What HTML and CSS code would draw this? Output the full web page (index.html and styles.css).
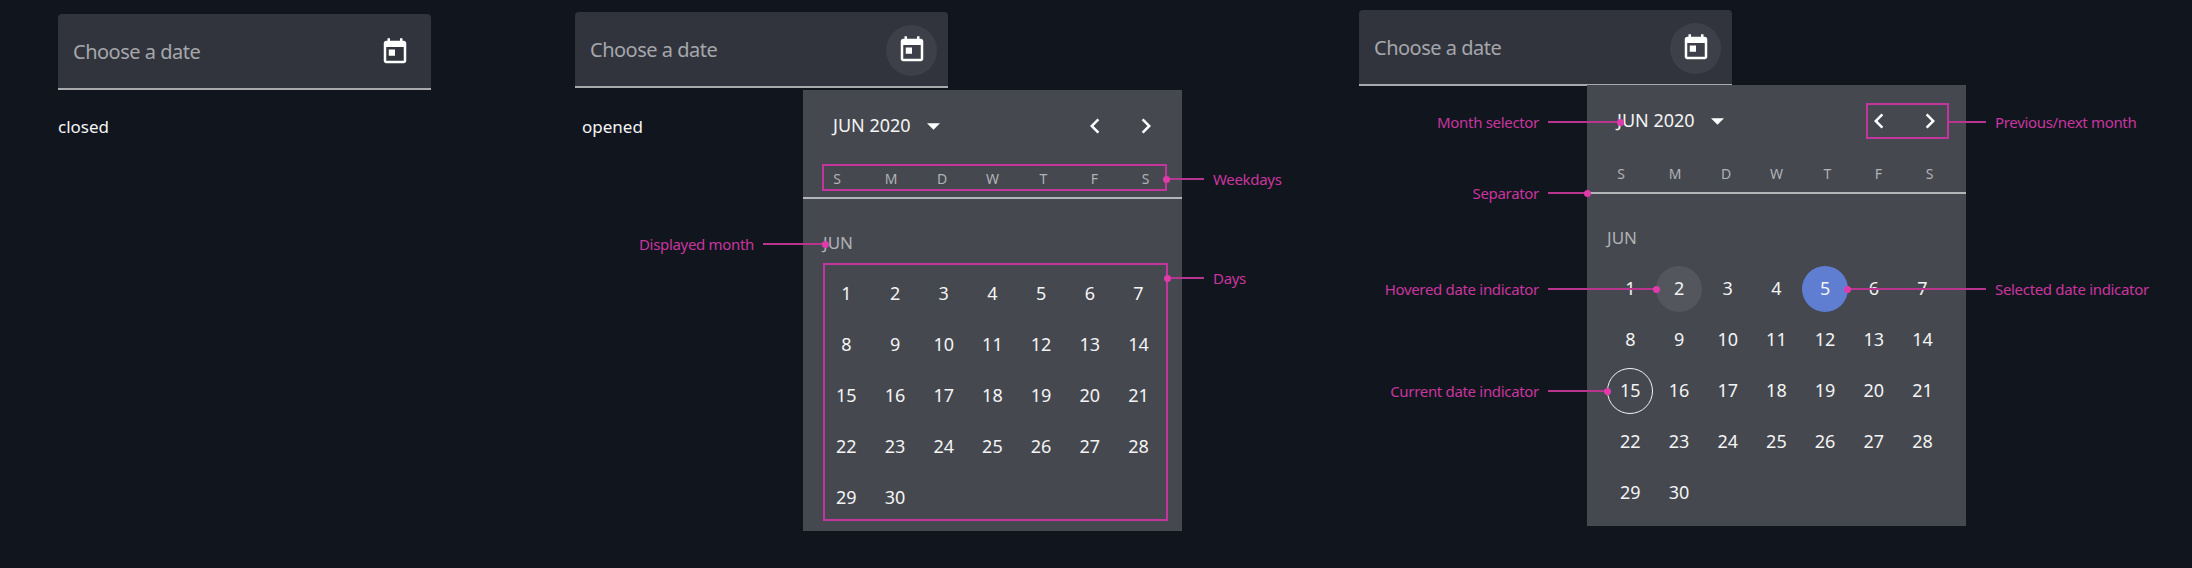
FILE: index.html
```html
<!DOCTYPE html>
<html lang="en">
<head>
    <meta charset="UTF-8">
    <meta name="viewport" content="width=device-width, initial-scale=1.0">
    <title>Date picker anatomy</title>
    <link rel="stylesheet" href="styles.css">
</head>
<body>
    <main class="examples">

        <section class="example example-closed">
            <div class="field">
                <span class="placeholder">Choose a date</span>
                <span class="icon-btn">
                    <svg class="icon-today" viewBox="0 0 24 24"><path d="M19 3h-1V1h-2v2H8V1H6v2H5c-1.11 0-1.99.9-1.99 2L3 19c0 1.1.89 2 2 2h14c1.1 0 2-.9 2-2V5c0-1.1-.9-2-2-2zm0 16H5V8h14v11zM7 10h5v5H7z"/></svg>
                </span>
            </div>
            <p class="caption">closed</p>
        </section>

        <section class="example example-opened">
            <div class="field">
                <span class="placeholder">Choose a date</span>
                <span class="icon-btn is-active">
                    <svg class="icon-today" viewBox="0 0 24 24"><path d="M19 3h-1V1h-2v2H8V1H6v2H5c-1.11 0-1.99.9-1.99 2L3 19c0 1.1.89 2 2 2h14c1.1 0 2-.9 2-2V5c0-1.1-.9-2-2-2zm0 16H5V8h14v11zM7 10h5v5H7z"/></svg>
                </span>
            </div>
            <p class="caption caption-opened">opened</p>
            <div class="popup">
                <div class="popup-head">
                    <span class="month-select">JUN 2020</span>
                    <svg class="icon-caret" viewBox="0 0 10 5"><path d="M0 0l5 5 5-5z"/></svg>
                    <svg class="icon-nav" viewBox="0 0 24 24"><path d="M15.41 7.41L14 6l-6 6 6 6 1.41-1.41L10.83 12z"/></svg>
                    <svg class="icon-nav" viewBox="0 0 24 24"><path d="M8.59 16.59L10 18l6-6-6-6-1.41 1.41L13.17 12z"/></svg>
                </div>
                <div class="weekdays">
                    <span>S</span><span>M</span><span>D</span><span>W</span><span>T</span><span>F</span><span>S</span>
                </div>
                <div class="month-label">JUN</div>
                <div class="days">
                    <span>1</span><span>2</span><span>3</span><span>4</span><span>5</span><span>6</span><span>7</span>
                    <span>8</span><span>9</span><span>10</span><span>11</span><span>12</span><span>13</span><span>14</span>
                    <span>15</span><span>16</span><span>17</span><span>18</span><span>19</span><span>20</span><span>21</span>
                    <span>22</span><span>23</span><span>24</span><span>25</span><span>26</span><span>27</span><span>28</span>
                    <span>29</span><span>30</span>
                </div>
            </div>
        </section>

        <section class="example example-states">
            <div class="field">
                <span class="placeholder">Choose a date</span>
                <span class="icon-btn is-active">
                    <svg class="icon-today" viewBox="0 0 24 24"><path d="M19 3h-1V1h-2v2H8V1H6v2H5c-1.11 0-1.99.9-1.99 2L3 19c0 1.1.89 2 2 2h14c1.1 0 2-.9 2-2V5c0-1.1-.9-2-2-2zm0 16H5V8h14v11zM7 10h5v5H7z"/></svg>
                </span>
            </div>
            <div class="popup">
                <div class="popup-head">
                    <span class="month-select">JUN 2020</span>
                    <svg class="icon-caret" viewBox="0 0 10 5"><path d="M0 0l5 5 5-5z"/></svg>
                    <svg class="icon-nav" viewBox="0 0 24 24"><path d="M15.41 7.41L14 6l-6 6 6 6 1.41-1.41L10.83 12z"/></svg>
                    <svg class="icon-nav" viewBox="0 0 24 24"><path d="M8.59 16.59L10 18l6-6-6-6-1.41 1.41L13.17 12z"/></svg>
                </div>
                <div class="weekdays">
                    <span>S</span><span>M</span><span>D</span><span>W</span><span>T</span><span>F</span><span>S</span>
                </div>
                <div class="month-label">JUN</div>
                <div class="days">
                    <span>1</span><span class="is-hovered">2</span><span>3</span><span>4</span><span class="is-selected">5</span><span>6</span><span>7</span>
                    <span>8</span><span>9</span><span>10</span><span>11</span><span>12</span><span>13</span><span>14</span>
                    <span class="is-today">15</span><span>16</span><span>17</span><span>18</span><span>19</span><span>20</span><span>21</span>
                    <span>22</span><span>23</span><span>24</span><span>25</span><span>26</span><span>27</span><span>28</span>
                    <span>29</span><span>30</span>
                </div>
            </div>
        </section>
    </main>

    <!-- annotations sit on top of the pickers -->
    <div class="frame frame-weekdays"></div>
    <div class="frame frame-days"></div>
    <div class="frame frame-nav"></div>

    <div class="note note-l note-displayed"><span class="note-text">Displayed month</span><i class="leader"></i></div>
    <div class="note note-l note-selector"><span class="note-text">Month selector</span><i class="leader"></i></div>
    <div class="note note-l note-separator"><span class="note-text">Separator</span><i class="leader"></i></div>
    <div class="note note-l note-hovered"><span class="note-text">Hovered date indicator</span><i class="leader"></i></div>
    <div class="note note-l note-current"><span class="note-text">Current date indicator</span><i class="leader"></i></div>

    <div class="note note-r note-weekdays"><i class="leader"></i><span class="note-text">Weekdays</span></div>
    <div class="note note-r note-days"><i class="leader"></i><span class="note-text">Days</span></div>
    <div class="note note-r note-nav"><i class="leader no-dot"></i><span class="note-text">Previous/next month</span></div>
    <div class="note note-r note-selected"><i class="leader"></i><span class="note-text">Selected date indicator</span></div>
</body>
</html>
```

FILE: styles.css
```css
html, body { height: 100%; }
body { margin: 0; background-color: #11161e; color: #f4f4f5; font-family: "Noto Sans", sans-serif; }

.examples { display: flex; align-items: flex-start; height: 100%; }
.example { position: relative; width: 373px; flex: none; }
.example-closed { margin: 14px 0 0 58px; }
.example-opened { margin: 12px 0 0 144px; }
.example-states { margin: 10px 0 0 411px; }

/* input */
.field { display: flex; align-items: center; justify-content: space-between; box-sizing: border-box; height: 76px; padding: 2px 11px 0 15px; background-color: #31343d; border-bottom: 2px solid #a8aaae; border-radius: 4px 4px 0 0; }
.placeholder { margin-bottom: 2px; font-size: 20px; letter-spacing: -0.5px; color: #a5a7ab; }
.icon-btn { display: flex; align-items: center; justify-content: center; width: 51px; height: 51px; border-radius: 50%; }
.icon-btn.is-active { background-color: #3d4048; }
.icon-today { width: 30px; height: 30px; fill: #fff; }

.caption { margin: 26px 0 0; font-size: 17px; line-height: 22px; }
.caption-opened { margin: 28px 0 0 7px; }

/* popup */
.popup { position: absolute; left: 228px; top: 78px; width: 379px; height: 441px; background-color: #45484f; }
.example-states .popup { top: 75px; }

.popup-head { display: flex; align-items: center; height: 72px; padding: 0 21px 0 30px; }
.month-select { margin-bottom: 2px; font-size: 18px; }
.icon-caret { width: 13px; height: 7px; margin-left: 16px; margin-right: auto; fill: #fff; }
.icon-nav { width: 30px; height: 30px; margin-left: 21px; fill: #fff; }

.weekdays { display: grid; grid-template-columns: 56px 52px 50px 51px 51px 51px 51px; align-items: center; height: 33px; padding: 0 0 2px 6px; border-bottom: 2px solid #b4b5b8; font-size: 14px; color: #b0b2b6; text-align: center; }

.month-label { height: 24px; margin-top: 32px; padding-left: 20px; font-size: 17px; line-height: 24px; color: #b0b2b6; }

.days { display: grid; grid-template-columns: repeat(7, 48.7px); grid-auto-rows: 51px; margin-top: 13px; padding-left: 19px; font-size: 18px; }
.days span { display: flex; align-items: center; justify-content: center; box-sizing: border-box; width: 46px; height: 46px; margin: 2.5px 1.35px; padding-bottom: 2px; border-radius: 50%; }
.days .is-hovered { background-color: #53565d; }
.days .is-selected { background-color: #5f7dd1; }
.days .is-today { border: 1px solid #f4f4f5; }

/* annotations */
.frame { position: absolute; box-sizing: border-box; border: 2px solid #c2359d; }
.frame-weekdays { left: 822px; top: 164px; width: 345px; height: 27px; }
.frame-days { left: 823px; top: 263px; width: 345px; height: 258px; }
.frame-nav { left: 1866px; top: 103px; width: 83px; height: 36px; }

.note { position: absolute; display: flex; align-items: center; height: 20px; font-size: 15px; letter-spacing: -0.32px; line-height: 20px; color: #c9359f; }
.note-text { margin-bottom: 1px; white-space: nowrap; }
.note-l .note-text { flex: none; width: 160px; margin-right: 9px; text-align: right; }
.note-r .note-text { margin-left: 9px; }
.leader { position: relative; display: block; flex: 1; height: 2px; background-color: #b9348f; }
.leader::after { content: ""; position: absolute; top: -2.5px; width: 7px; height: 7px; border-radius: 50%; background-color: #e03bab; }
.note-l .leader::after { right: -3px; }
.note-r .leader::after { left: -3px; }
.no-dot::after { display: none; }

.note-displayed { left: 594px; width: 232px; top: 234px; }
.note-selector { left: 1379px; width: 242px; top: 112px; }
.note-separator { left: 1379px; width: 209px; top: 183px; }
.note-hovered { left: 1379px; width: 278px; top: 279px; }
.note-current { left: 1379px; width: 229px; top: 381px; }

.note-r .leader { flex: none; }
.note-weekdays { left: 1166px; top: 169px; }
.note-weekdays .leader { width: 38px; }
.note-days { left: 1167px; top: 268px; }
.note-days .leader { width: 37px; }
.note-nav { left: 1949px; top: 112px; }
.note-nav .leader { width: 37px; }
.note-selected { left: 1847px; top: 279px; }
.note-selected .leader { width: 139px; }
```
